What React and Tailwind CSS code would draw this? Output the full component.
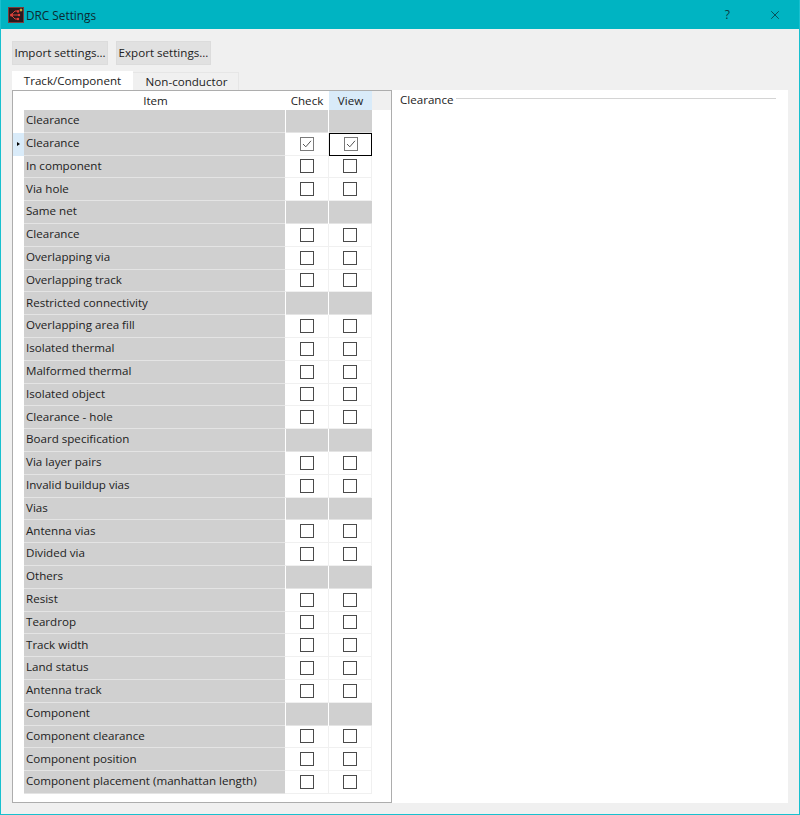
import { X } from 'lucide-react'

const rows = [
  { label: 'Clearance', group: true },
  { label: 'Clearance', checked: true, current: true },
  { label: 'In component' },
  { label: 'Via hole' },
  { label: 'Same net', group: true },
  { label: 'Clearance' },
  { label: 'Overlapping via' },
  { label: 'Overlapping track' },
  { label: 'Restricted connectivity', group: true },
  { label: 'Overlapping area fill' },
  { label: 'Isolated thermal' },
  { label: 'Malformed thermal' },
  { label: 'Isolated object' },
  { label: 'Clearance - hole' },
  { label: 'Board specification', group: true },
  { label: 'Via layer pairs' },
  { label: 'Invalid buildup vias' },
  { label: 'Vias', group: true },
  { label: 'Antenna vias' },
  { label: 'Divided via' },
  { label: 'Others', group: true },
  { label: 'Resist' },
  { label: 'Teardrop' },
  { label: 'Track width' },
  { label: 'Land status' },
  { label: 'Antenna track' },
  { label: 'Component', group: true },
  { label: 'Component clearance' },
  { label: 'Component position' },
  { label: 'Component placement (manhattan length)' },
]

function AppIcon() {
  return (
    <svg width="16" height="16" viewBox="0 0 16 16" className="shrink-0">
      <rect x="0.5" y="0.5" width="15" height="15" fill="#2a1a1c" stroke="#7a3b3b" />
      <path d="M3 8 L7 4 H11 M3 8 L7 8 H12 M3 8 L7 12 H11" fill="none" stroke="#e0413a" strokeWidth="1" />
      <circle cx="3.5" cy="8" r="1.5" fill="#e0413a" />
      <circle cx="10" cy="4.5" r="1.2" fill="#e0413a" />
      <circle cx="11" cy="8" r="1.2" fill="#e0413a" />
      <circle cx="10" cy="12" r="1.2" fill="#e0413a" />
      <path d="M13 1 L13.7 2.4 L15 3 L13.7 3.6 L13 5 L12.3 3.6 L11 3 L12.3 2.4 Z" fill="#f4c542" />
    </svg>
  )
}

function Checkbox({ checked }) {
  return (
    <span className={`flex w-[14px] h-[14px] items-center justify-center border bg-white ${checked ? 'border-[#7a7a7a]' : 'border-[#4a4a4a]'}`}>
      {checked && (
        <svg width="12" height="12" viewBox="0 0 12 12">
          <path d="M2 6 L4.8 8.8 L10 2.8" fill="none" stroke="#555" strokeWidth="1" />
        </svg>
      )}
    </span>
  )
}

function Row({ row }) {
  return (
    <div className="flex h-[22.8px]">
      <div className={`flex w-[11px] shrink-0 items-center justify-center ${row.current ? 'bg-[#d9ebf9]' : 'bg-white'}`}>
        {row.current && <span className="border-y-[2.5px] border-l-[3px] border-y-transparent border-l-black" />}
      </div>
      <div className="flex w-[261px] shrink-0 items-center border-b border-[#e4e4e4] bg-[#d0d0d0] pb-[2px] pl-[2px] text-[#222]">
        {row.label}
      </div>
      {row.group ? (
        <>
          <div className="ml-px w-[42px] shrink-0 border-b border-[#e4e4e4] bg-[#d0d0d0]" />
          <div className="ml-px w-[43px] shrink-0 border-b border-[#e4e4e4] bg-[#d0d0d0]" />
        </>
      ) : (
        <>
          <div className="flex w-[44px] shrink-0 items-center justify-center border-b border-r border-[#f0f0f0] pl-[1px]">
            <Checkbox checked={row.checked} />
          </div>
          <div className={`flex w-[43px] shrink-0 items-center justify-center ${row.current ? 'border-[1.5px] border-black' : 'border-b border-r border-[#f0f0f0]'}`}>
            <Checkbox checked={row.checked} />
          </div>
        </>
      )}
    </div>
  )
}

export default function App() {
  return (
    <div className="flex h-[815px] w-[800px] flex-col overflow-hidden border border-t-0 border-[#18c0cf] bg-[#f0f0f0] font-['Open_Sans','Noto_Sans',sans-serif] text-[11.6px] text-[#222]">
      <div className="-mx-px flex h-[29px] shrink-0 items-center bg-[#00b4c2] pl-[8px]">
        <AppIcon />
        <span className="ml-[2px] pt-[2px] text-[11.8px] text-[#0c2a30]">DRC Settings</span>
        <span className="ml-auto mr-[38px] text-[12px] text-[#0c3a40]">?</span>
        <X size={14} strokeWidth={1.3} className="mr-[18px] text-[#0a3238]" />
      </div>

      <div className="flex flex-1 flex-col px-[11px] pt-[12px] pb-[12px]">
        <div className="flex gap-[8px]">
          <button className="h-[24px] w-[96px] border border-[#dcdcdc] bg-[#e1e1e1] whitespace-nowrap">Import settings...</button>
          <button className="h-[24px] w-[95px] border border-[#dcdcdc] bg-[#e1e1e1] whitespace-nowrap">Export settings...</button>
        </div>

        <div className="mt-[6px] flex h-[19px] items-end">
          <div className="flex h-[19px] w-[121px] items-center justify-center bg-white">Track/Component</div>
          <div className="flex h-[18px] w-[106px] items-center justify-center border-r border-t border-[#e6e6e6] bg-[#f0f0f0] pl-[2px]">Non-conductor</div>
        </div>

        <div className="flex h-[713px] w-[776px] bg-white">
          <div className="h-full w-[380px] shrink-0 border border-[#adadad]">
            <div className="flex h-[19px]">
              <div className="w-[11px] shrink-0" />
              <div className="flex w-[261px] shrink-0 items-center justify-center pl-[2px]">Item</div>
              <div className="flex w-[44px] shrink-0 items-center justify-center">Check</div>
              <div className="flex w-[43px] shrink-0 items-center justify-center bg-[#d9ebf9]">View</div>
              <div className="flex-1 bg-[#f0f0f0]" />
            </div>
            {rows.map((row, i) => (
              <Row key={i} row={row} />
            ))}
          </div>

          <div className="flex h-[20px] flex-1 items-center pl-[8px] pr-[12px]">
            <span className="-mt-[1px]">Clearance</span>
            <span className="ml-[2px] -mt-[4px] h-px flex-1 bg-[#d4d4d4]" />
          </div>
        </div>
      </div>
    </div>
  )
}
